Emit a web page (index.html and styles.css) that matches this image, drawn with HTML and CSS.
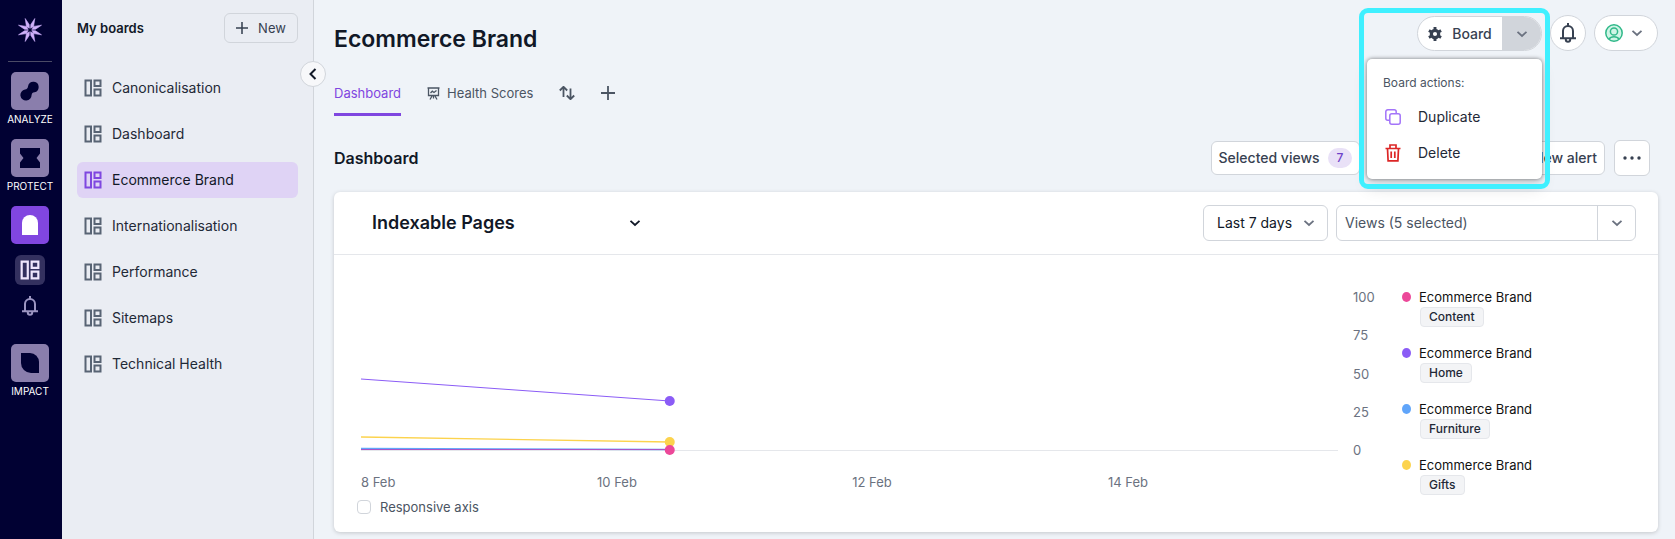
FILE: index.html
```html
<!DOCTYPE html>
<html lang="en">
<head>
<meta charset="utf-8">
<title>Ecommerce Brand</title>
<link rel="stylesheet" href="styles.css">
</head>
<body>
<svg class="sprite" aria-hidden="true">
  <symbol id="board" viewBox="0 0 18 18"><path d="M1.500 1.500H7v15H1.500zM10.500 1.500h6V7h-6zM10.500 10.500h6v6h-6z" fill="none" stroke="currentColor" stroke-width="2"/></symbol>
  <symbol id="chevron" viewBox="0 0 12 12"><path d="M1.500 3.800 6 8 10.500 3.800" fill="none" stroke="currentColor" stroke-width="1.800"/></symbol>
  <symbol id="bell" viewBox="0 0 16 20"><path d="M0 15.200h16M3 15V8a5 5 0 0 1 10 0V15M8 3V0M5.800 15.500v1a2.200 2.200 0 0 0 4.400 0v-1" fill="none" stroke="currentColor" stroke-width="2"/></symbol>
  <symbol id="plus" viewBox="0 0 14 14"><path d="M7 0v14M0 7h14" fill="none" stroke="currentColor" stroke-width="1.800"/></symbol>
</svg>
<div class="app">
  <nav class="rail" aria-label="Products">
    <a class="logo" href="#" aria-label="Home"><svg width="24" height="24" viewBox="-12 -12 24 24" fill="#cfb0fa"><g id="ray"><path d="M-.6 -1.800-3.600 -3.600-4.800 -11.500-.8 -5.500zM.6 -1.800 3.600 -3.600 4.800 -11.500.8 -5.500z" stroke="#cfb0fa" stroke-width=".6"/></g><use href="#ray" transform="rotate(90)"/><use href="#ray" transform="rotate(180)"/><use href="#ray" transform="rotate(270)"/></svg></a>
    <a class="product" href="#"><span class="tile"><svg width="20" height="20" viewBox="0 0 20 20"><path d="M8 5.500A5.200 5.200 0 0 1 14 .700a5.400 5.400 0 0 1 .500 10.600c-2 .3-2.500.7-2.900 2.600A5.600 5.600 0 1 1 5 8.500c2-.4 2.600-1 3-3z" fill="#010133"/></svg></span>ANALYZE</a>
    <a class="product" href="#"><span class="tile"><svg width="20" height="20" viewBox="0 0 20 20"><path d="M0 0h20v5.500L16.500 10 20 14.500V20H0v-5.500L3.500 10 0 5.500z" fill="#010133"/></svg></span>PROTECT</a>
    <a class="product current" href="#" aria-label="Monitor"><span class="tile"><svg width="16" height="20" viewBox="0 0 16 20"><path d="M0 20V8a8 8 0 0 1 16 0v12z" fill="#fff"/></svg></span></a>
    <a class="sub active" href="#" aria-label="Boards"><svg width="20" height="20"><use href="#board"/></svg></a>
    <a class="sub" href="#" aria-label="Alerts"><svg width="16" height="20"><use href="#bell"/></svg></a>
    <a class="product impact" href="#"><span class="tile"><svg width="20" height="20" viewBox="0 0 20 20"><path d="M1 0h9a9 9 0 0 1 9 9v11h-8A10 10 0 0 1 1 10z" fill="#010133"/></svg></span>IMPACT</a>
  </nav>

  <aside class="boards">
    <div class="boards-head">
      <h2>My boards</h2>
      <button class="new" type="button"><svg width="12" height="12"><use href="#plus"/></svg>New</button>
    </div>
    <nav class="board-list" aria-label="Boards">
      <a href="#"><svg width="18" height="18"><use href="#board"/></svg>Canonicalisation</a>
      <a href="#"><svg width="18" height="18"><use href="#board"/></svg>Dashboard</a>
      <a class="active" href="#"><svg width="18" height="18"><use href="#board"/></svg>Ecommerce Brand</a>
      <a href="#"><svg width="18" height="18"><use href="#board"/></svg>Internationalisation</a>
      <a href="#"><svg width="18" height="18"><use href="#board"/></svg>Performance</a>
      <a href="#"><svg width="18" height="18"><use href="#board"/></svg>Sitemaps</a>
      <a href="#"><svg width="18" height="18"><use href="#board"/></svg>Technical Health</a>
    </nav>
    <button class="collapse" type="button" aria-label="Collapse sidebar"><svg width="12" height="12" viewBox="0 0 12 12"><path d="M8.500 1 3.500 6l5 5" fill="none" stroke="currentColor" stroke-width="2"/></svg></button>
  </aside>

  <main>
    <header class="top">
      <h1>Ecommerce Brand</h1>
      <div class="board-menu">
        <div class="split">
          <button type="button" class="settings"><svg width="14" height="14" viewBox="0 0 24 24" fill="none" stroke="currentColor"><circle cx="12" cy="12" r="6.300" stroke-width="5.500"/><path d="M12 0v4M12 20v4M1.600 6l3.500 2M18.900 16l3.500 2M1.600 18l3.500-2M18.900 8l3.500-2" stroke-width="5"/></svg>Board</button>
          <button type="button" class="toggle" aria-label="Board actions" aria-expanded="true"><svg width="12" height="12"><use href="#chevron"/></svg></button>
        </div>
        <div class="menu">
          <p>Board actions:</p>
          <button type="button"><svg width="16" height="16" viewBox="0 0 16 16" fill="none" stroke="#a374f9" stroke-width="1.500"><rect x="4.800" y="4.800" width="10.400" height="10.400" rx="2"/><path d="M4.800 11.200h-2A2 2 0 0 1 .8 9.200V2.800a2 2 0 0 1 2-2h6.400a2 2 0 0 1 2 2v2"/></svg>Duplicate</button>
          <button type="button"><svg width="16" height="18" viewBox="0 0 16 18" fill="none" stroke="#dc2626" stroke-width="1.700"><path d="M.5 4.500h15M5 4.300V1h6v3.300M2.500 4.500l.6 12.300h9.800l.6-12.300M6.200 7.500v6.500M9.800 7.500v6.500"/></svg>Delete</button>
        </div>
        <div class="highlight"></div>
      </div>
      <button class="round" type="button" aria-label="Notifications"><svg width="16" height="20"><use href="#bell"/></svg></button>
      <button class="user" type="button" aria-label="Account"><svg width="18" height="18" viewBox="0 0 18 18" fill="#d0f5e6" stroke="#31b98a" stroke-width="1.500"><circle cx="9" cy="9" r="8.200"/><path d="M4 15a5.500 4 0 0 1 10 0" /><circle cx="9" cy="7.500" r="3.600"/></svg><svg class="muted" width="12" height="12"><use href="#chevron"/></svg></button>
    </header>

    <nav class="tabs" aria-label="Dashboards">
      <a class="active" href="#">Dashboard</a>
      <a href="#"><svg width="13" height="13" viewBox="0 0 12 13" fill="none" stroke="currentColor" stroke-width="1.300"><path d="M0 1h12M1 1v7.500h10V1M4.500 9l-2 3.500M7.500 9l2 3.500M6 9v2.500M3 6l1.800-1.800 1.700 1.300L9 3.500"/></svg>Health Scores</a>
      <button type="button" aria-label="Reorder"><svg width="16" height="14" viewBox="0 0 16 14" fill="none" stroke="currentColor" stroke-width="1.800"><path d="M4.500 11V1M.8 4.500l3.700-3.700 3.700 3.700M11.500 2.500v10.500M7.800 9.500l3.700 3.700 3.700-3.700"/></svg></button>
      <button type="button" aria-label="Add tab"><svg width="14" height="14"><use href="#plus"/></svg></button>
    </nav>

    <section class="toolbar">
      <h2>Dashboard</h2>
      <button type="button" class="views">Selected views <span class="badge">7</span></button>
      <button type="button" class="alert"><svg width="12" height="12"><use href="#plus"/></svg>New alert</button>
      <button type="button" class="more" aria-label="More"><svg width="18" height="4" viewBox="0 0 18 4" fill="currentColor"><circle cx="2" cy="2" r="1.700"/><circle cx="9" cy="2" r="1.700"/><circle cx="16" cy="2" r="1.700"/></svg></button>
    </section>

    <section class="card">
      <div class="card-head">
        <label class="pick metric"><select aria-label="Metric"><option>Indexable Pages</option></select><svg width="12" height="12"><use href="#chevron"/></svg></label>
        <label class="pick range"><select aria-label="Date range"><option>Last 7 days</option></select><svg width="12" height="12"><use href="#chevron"/></svg></label>
        <div class="combo"><input type="text" aria-label="Views" placeholder="Views (5 selected)"><button type="button" aria-label="Show views"><svg width="12" height="12"><use href="#chevron"/></svg></button></div>
      </div>
      <div class="card-body">
        <div class="plot">
          <svg class="lines" role="img" aria-label="Indexable pages by view">
            <line x1="0" y1="153" x2="100%" y2="153" stroke="#e5e7eb" shape-rendering="crispEdges"/>
            <line x1="0" y1="82" x2="31.600%" y2="104" stroke="#8b5cf6"/>
            <line x1="0" y1="140" x2="31.600%" y2="145" stroke="#fcd34d" stroke-width="1.300"/>
            <line x1="0" y1="151.500" x2="31.600%" y2="152.500" stroke="#60a5fa" stroke-width="1.300"/>
            <line x1="0" y1="152.500" x2="31.600%" y2="152.500" stroke="#a855c8"/>
            <circle cx="31.600%" cy="104" r="5" fill="#8b5cf6"/>
            <circle cx="31.600%" cy="145" r="5" fill="#fcd34d"/>
            <circle cx="31.600%" cy="153" r="5" fill="#ec4899"/>
            <g class="dates"><text x="0" y="190">8 Feb</text><g text-anchor="middle"><text x="26.200%" y="190">10 Feb</text><text x="52.300%" y="190">12 Feb</text><text x="78.500%" y="190">14 Feb</text></g></g>
          </svg>
          <div class="scale"><span>100</span><span>75</span><span>50</span><span>25</span><span>0</span></div>
          <ul class="legend">
            <li class="pink">Ecommerce Brand<span>Content</span></li>
            <li class="purple">Ecommerce Brand<span>Home</span></li>
            <li class="blue">Ecommerce Brand<span>Furniture</span></li>
            <li class="yellow">Ecommerce Brand<span>Gifts</span></li>
          </ul>
        </div>
        <label class="axis"><input type="checkbox">Responsive axis</label>
      </div>
    </section>
  </main>
</div>
</body>
</html>
```
FILE: styles.css
```css
* { box-sizing: border-box; }
body { margin: 0; background: #eff3f8; color: #111827; font: 14px/20px Inter, sans-serif; }
h1, h2, p, ul { margin: 0; padding: 0; }
a { color: inherit; text-decoration: none; }
button, input, select { margin: 0; padding: 0; border: 0; background: none; color: inherit; font: inherit; }
svg { display: block; flex: none; }
.sprite { position: absolute; width: 0; height: 0; }
.app { display: flex; min-height: 100vh; }

.rail { flex: none; width: 62px; padding-right: 2px; background: #010133; display: flex; flex-direction: column; align-items: center; color: #fff; }
.logo { width: 44px; height: 62px; padding: 18px 10px 0; margin-bottom: 10px; border-bottom: 1px solid #4b4b66; }
.product { display: flex; flex-direction: column; align-items: center; gap: 2px; margin-bottom: 13px; font-size: 10px; line-height: 14px; }
.tile { width: 38px; height: 38px; border-radius: 5px; background: #8a7eac; display: grid; place-items: center; }
.current { margin-bottom: 11px; }
.current .tile { background: #8146e0; }
.sub { width: 30px; height: 30px; margin-bottom: 6px; border-radius: 6px; display: grid; place-items: center; color: #9c95c2; }
.sub.active { background: #33305f; color: #efe6fd; }
.impact { margin-top: 17px; }

.boards { flex: none; position: relative; width: 252px; padding: 13px 15px; background: #eaedf3; border-right: 1px solid #d1d5db; }
.boards-head { display: flex; align-items: center; justify-content: space-between; margin-bottom: 27px; }
.boards-head h2 { font-size: 13px; font-weight: 600; }
.new { width: 74px; height: 30px; display: flex; align-items: center; justify-content: center; gap: 10px; border: 1px solid #d1d5db; border-radius: 6px; color: #374151; font-size: 13px; }
.board-list { display: flex; flex-direction: column; gap: 10px; }
.board-list a { height: 36px; padding: 0 7px; display: flex; align-items: center; gap: 10px; border-radius: 6px; color: #1f2937; }
.board-list svg { color: #586474; }
.board-list .active { background: #dfd3f5; color: #111827; }
.board-list .active svg { color: #7f46e0; }
.collapse { position: absolute; top: 61px; right: -13px; width: 26px; height: 26px; display: grid; place-items: center; border: 1px solid #d1d5db; border-radius: 50%; background: #f7f8fa; }

main { flex: 1; min-width: 0; padding: 15px 17px 7px 20px; }
.top { display: flex; align-items: center; gap: 8px; height: 36px; }
h1 { flex: 1; padding-top: 12px; font-size: 23px; line-height: 36px; font-weight: 600; }
.board-menu { position: relative; padding-top: 1px; }
.split { display: flex; width: 125px; height: 35px; border: 1px solid #d1d5db; border-radius: 18px; overflow: hidden; background: #fff; }
.settings { flex: 1; display: flex; align-items: center; justify-content: center; gap: 10px; color: #374151; font-weight: 500; }
.toggle { width: 39px; display: grid; place-items: center; background: #d1d5db; color: #6b7280; }
.round, .user { height: 36px; border: 1px solid #d1d5db; border-radius: 18px; background: #fff; display: flex; align-items: center; justify-content: center; gap: 8px; color: #374151; }
.round { width: 36px; }
.user { width: 64px; padding-right: 4px; }
.muted { color: #6b7280; }
.menu { position: absolute; z-index: 2; top: 44px; right: 0; width: 175px; padding: 14px 16px 8px; border-radius: 5px; background: #fff; box-shadow: 0 0 4px #00000080, 0 10px 15px #0000001a; }
.menu p { margin-bottom: 6px; color: #4b5563; font-size: 12px; }
.menu button { width: 100%; height: 36px; display: flex; align-items: center; gap: 17px; padding-left: 2px; color: #1f2937; }
.highlight { position: absolute; z-index: 3; top: -7px; right: -8px; width: 191px; height: 181px; border: 5px solid #3ff0ff; border-radius: 9px; pointer-events: none; }

.tabs { display: flex; margin-top: 21px; gap: 26px; height: 44px; color: #4b5563; font-size: 13px; }
.tabs a, .tabs button { display: flex; align-items: center; gap: 7px; padding-bottom: 2px; }
.tabs .active { border-bottom: 3px solid #7f46e0; padding: 2px 0 1px; color: #7f46e0; }

.toolbar { display: flex; align-items: center; gap: 9px; margin: 24px 8px 16px 0; height: 36px; }
.toolbar h2 { flex: 1; font-size: 16px; font-weight: 600; }
.toolbar button { height: 34px; border: 1px solid #d1d5db; border-radius: 6px; background: #fff; display: flex; align-items: center; justify-content: center; color: #374151; font-weight: 500; }
.toolbar .views { width: 149px; gap: 8px; margin-right: 92px; }
.badge { padding: 0 9px; border-radius: 10px; background: #e9e1f7; color: #6d3fc9; font-size: 12px; }
.toolbar .alert { width: 144px; padding-right: 7px; gap: 10px; justify-content: flex-end; }
.toolbar .more { width: 36px; height: 36px; }

.card { border-radius: 6px; background: #fff; box-shadow: 0 1px 4px #0000002e; }
.card-head { display: flex; align-items: center; gap: 8px; height: 63px; padding: 0 22px 0 38px; border-bottom: 1px solid #e5e7eb; }
.pick { display: grid; align-items: center; }
.pick select, .pick svg { grid-area: 1 / 1; }
.pick select { appearance: none; width: 100%; height: 36px; }
.pick svg { justify-self: end; pointer-events: none; }
.metric { width: 269px; margin-right: auto; font-size: 18px; font-weight: 600; }
.range { width: 125px; border: 1px solid #d1d5db; border-radius: 6px; }
.range select { height: 34px; padding-left: 13px; }
.range svg { margin-right: 12px; color: #6b7280; }
.combo { width: 300px; height: 36px; display: flex; border: 1px solid #d1d5db; border-radius: 6px; }
.combo input { flex: 1; min-width: 0; padding-left: 8px; }
.combo input::placeholder { color: #4b5563; opacity: 1; }
.combo button { width: 38px; display: grid; place-items: center; border-left: 1px solid #d1d5db; color: #6b7280; }

.card-body { display: flow-root; padding: 32px 22px 15px 27px; }
.plot { display: grid; grid-template-columns: 1fr 40px 228px; column-gap: 15px; height: 210px; }
.lines { width: 100%; height: 200px; margin-top: 10px; overflow: visible; }
.dates text { fill: #6b7280; font-size: 13px; }
.scale { height: 173px; display: flex; flex-direction: column; justify-content: space-between; color: #6b7280; font-size: 13px; }
.legend { list-style: none; display: flex; flex-direction: column; gap: 16px; font-size: 13px; }
.legend li { position: relative; display: flex; flex-direction: column; align-items: flex-start; height: 40px; padding-left: 11px; color: #111; }
.legend li::before { content: ""; position: absolute; left: -6px; top: 5px; width: 9px; height: 10px; border-radius: 50%; background: var(--series); }
.legend span { margin-left: 1px; padding: 0 8px; border: 1px solid #e5e7eb; border-radius: 4px; background: #f3f4f6; color: #1f2937; font-size: 12px; line-height: 18px; font-weight: 500; }
.pink { --series: #ec4899; }
.purple { --series: #8b5cf6; }
.blue { --series: #60a5fa; }
.yellow { --series: #fcd34d; }
.axis { display: flex; width: max-content; align-items: center; gap: 9px; margin-left: -4px; color: #4b5563; font-size: 13px; }
.axis input { appearance: none; width: 14px; height: 14px; border: 1px solid #d1d5db; border-radius: 4px; background: #fff; }
```
